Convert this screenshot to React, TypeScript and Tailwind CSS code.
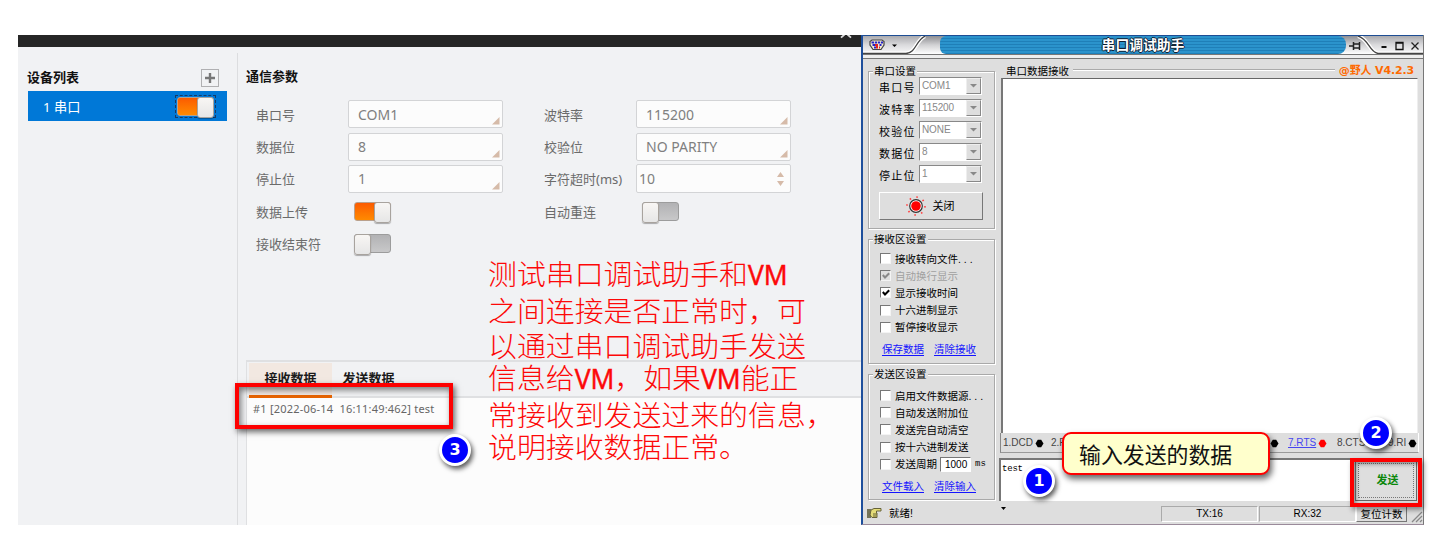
import React from 'react'

const ui = "font-['Noto_Sans','Noto_Sans_CJK_SC',sans-serif]"
const win = "font-['Liberation_Sans','Noto_Sans_CJK_SC',sans-serif]"

function Toggle({ on }: { on?: boolean }) {
  return (
    <div
      className={
        on
          ? 'flex h-[19px] w-[37px] justify-end rounded-[3px] border border-[#b9a08c] bg-linear-to-b from-[#fb5a00] to-[#ff8a00]'
          : 'flex h-[19px] w-[37px] justify-start rounded-[3px] border border-[#9c9c9c] bg-linear-to-b from-[#b2b2b4] to-[#c8c8c9]'
      }
    >
      <div className="-m-px h-[21px] w-[17px] shrink-0 rounded-[3px] border border-[#a8a39e] bg-linear-to-b from-[#f8f6f4] to-[#e6e6e6] shadow-[0_1px_1px_rgba(0,0,0,.3)]" />
    </div>
  )
}

function Field({ value }: { value: string }) {
  return (
    <div className="flex h-7 w-[155px] items-center justify-between rounded-[2px] border border-[#d3d4d6] bg-[#fcfcfc] pr-[2px] pl-[9px]">
      <span className="pt-px text-[14px] leading-[26px] text-[#808080]">{value}</span>
      <svg width="8" height="8" className="mb-[2px] self-end">
        <path d="M7.5 0V7.5H0Z" fill="#d6bba9" />
      </svg>
    </div>
  )
}

function Row({ label, children }: { label: string; children: React.ReactNode }) {
  return (
    <div className="flex h-[32.4px] items-center">
      <span className="w-[92px] whitespace-nowrap pt-px text-[13px] leading-4 text-[#6b6b6b]">{label}</span>
      {children}
    </div>
  )
}

function Badge({ n, place }: { n: string; place: string }) {
  return (
    <div
      className={`absolute flex h-[32px] w-[32px] items-center justify-center rounded-full border-[3px] border-white bg-[#0000fe] font-['DejaVu_Sans',sans-serif] text-[16px] leading-none font-bold text-white shadow-[2px_3px_5px_rgba(0,0,0,.65)] ${place}`}
    >
      {n}
    </div>
  )
}

function DevicePanel() {
  return (
    <section className={`flex h-[490px] w-[843px] flex-col overflow-hidden bg-[#f1f2f4] ${ui}`}>
      <header className="flex h-3 shrink-0 justify-end bg-[#262626] pr-[9px]">
        <svg width="12" height="4">
          <path d="M1 2.6L4.500 -.4M7.500 -.4L11 2.6" stroke="#ddd" strokeWidth="1.8" />
        </svg>
      </header>
      <div className="flex min-h-0 flex-1">
        <aside className="flex w-[219px] flex-col pt-[22px] pr-[9px] pl-[9px]">
          <div className="flex h-[18px] items-center justify-between pr-[9px]">
            <h2 className="pb-[3px] text-[13px] leading-4 font-bold text-[#111]">设备列表</h2>
            <div className="flex h-[18px] w-[18px] items-center justify-center border border-[#b0b0b2]">
              <svg width="10" height="10">
                <path d="M5 0V10M0 5H10" stroke="#777" strokeWidth="2.4" />
              </svg>
            </div>
          </div>
          <div className="mt-1 ml-px flex h-[30px] w-[199px] items-center justify-between bg-[#0078d7] pr-[11px] pl-[15px] text-white">
            <span className="pt-[2px] text-[13.2px] leading-5">1 串口</span>
            <div className="border border-dashed border-[#153a66] p-px">
              <Toggle on />
            </div>
          </div>
        </aside>
        <div className="mt-[6px] w-px bg-[#dcdddf]" />
        <main className="flex min-w-0 flex-1 flex-col pl-2">
          <h2 className="mt-[21px] text-[13px] leading-4 font-bold text-[#111]">通信参数</h2>
          <div className="mt-[14px] flex pl-[10px]">
            <div className="w-[288px]">
              <Row label="串口号"><Field value="COM1" /></Row>
              <Row label="数据位"><Field value="8" /></Row>
              <Row label="停止位"><Field value="1" /></Row>
              <Row label="数据上传"><div className="pl-[6px]"><Toggle on /></div></Row>
              <Row label="接收结束符"><div className="pl-[6px]"><Toggle /></div></Row>
            </div>
            <div>
              <Row label="波特率"><Field value="115200" /></Row>
              <Row label="校验位"><Field value="NO PARITY" /></Row>
              <Row label="字符超时(ms)">
                <div className="flex h-[29px] w-[155px] items-center justify-between rounded-[2px] border border-[#d3d4d6] bg-[#fcfcfc] pr-[6px] pl-[2px]">
                  <span className="text-[14px] text-[#808080]">10</span>
                  <svg width="7" height="14">
                    <path d="M0 5L3.5 0L7 5ZM0 9L3.5 14L7 9Z" fill="#d6bba9" />
                  </svg>
                </div>
              </Row>
              <Row label="自动重连"><div className="pl-[6px]"><Toggle /></div></Row>
            </div>
          </div>
          <div className="mt-auto flex h-[165px] shrink-0 flex-col border-t-2 border-l border-[#dfe0e2]">
            <div className="flex h-[36px] shrink-0 border-b-2 border-[#dfe0e2] pl-[2px] text-[13px] font-bold text-[#1b1b1b]">
              <div className="mt-px h-[35px] w-[83px] border-b-[3px] border-[#e66300] bg-[#f2e8e1] text-center leading-[30px]">接收数据</div>
              <div className="mt-px w-[73px] text-center leading-[30px]">发送数据</div>
            </div>
            <div className="flex-1 bg-[#fcfcfc] pt-[2px] pl-[6px]">
              <p className="text-[11px] leading-[17px] tracking-[.21px] whitespace-pre text-[#666]">#1 [2022-06-14  16:11:49:462] test</p>
            </div>
          </div>
        </main>
      </div>
    </section>
  )
}

function Group({ title, className, children }: { title: string; className: string; children: React.ReactNode }) {
  return (
    <fieldset className={`w-[127px] border border-[#a9a9a9] shadow-[1px_1px_0_#fff,inset_1px_1px_0_#fff] ${className}`}>
      <legend className="ml-[4px] h-3 bg-[#dedede] px-px text-[10.5px] leading-3">{title}</legend>
      {children}
    </fieldset>
  )
}

function Combo({ label, value }: { label: string; value: string }) {
  return (
    <div className="flex h-[22px] items-start">
      <span className="w-[40px] pt-[4px] text-[11px] leading-[14px] tracking-[1.2px] whitespace-nowrap">{label}</span>
      <div className="flex h-[18px] w-[63px] justify-between border border-t-[#888] border-r-[#fff] border-b-[#fff] border-l-[#888] bg-white">
        <span className="pl-[2px] text-[10px] leading-[15px] tracking-[-.1px] text-[#888]">{value}</span>
        <div className="flex w-[15px] items-center justify-center border border-t-[#eee] border-r-[#888] border-b-[#888] border-l-[#eee] bg-[#dedede]">
          <svg width="7" height="4">
            <path d="M0 0H7L3.5 3.5Z" fill="#888" />
          </svg>
        </div>
      </div>
    </div>
  )
}

function Check({ label, on, dim, children }: { label: string; on?: boolean; dim?: boolean; children?: React.ReactNode }) {
  return (
    <div className="flex h-[17.2px] items-center">
      <div className={`mr-[4px] flex h-[11px] w-[11px] shrink-0 items-center justify-center border border-t-[#777] border-r-[#f4f4f4] border-b-[#f4f4f4] border-l-[#777] ${dim ? 'bg-[#dedede]' : 'bg-white'}`}>
        {on && (
          <svg width="8" height="8">
            <path d="M.8 3L3 5.5L7.2 1.2" fill="none" stroke={dim ? '#888' : '#000'} strokeWidth="2" />
          </svg>
        )}
      </div>
      <span className={`text-[10.5px] leading-[14px] whitespace-nowrap ${dim ? 'text-[#a0a0a0]' : 'text-black'}`}>{label}</span>
      {children}
    </div>
  )
}

function Links({ a, b }: { a: string; b: string }) {
  return (
    <div className="flex gap-[10px] pl-[2px] text-[10.5px] leading-[14px] text-[#1414ff] underline underline-offset-2">
      <span>{a}</span>
      <span>{b}</span>
    </div>
  )
}

function Dot({ red }: { red?: boolean }) {
  return (
    <svg width="9" height="9" className="ml-[2px]">
      <path d="M2.8 .8H6.2L8.5 4.5L6.2 8.2H2.8L.5 4.5Z" fill={red ? '#f00' : '#000'} />
    </svg>
  )
}

function Signal({ name, width, red }: { name: string; width: string; red?: boolean }) {
  return (
    <div className={`flex items-center ${width}`}>
      <span className={red ? 'text-[#4646f0] underline' : 'text-[#444]'}>{name}</span>
      <Dot red={red} />
    </div>
  )
}

function TitleBar() {
  return (
    <header className="flex h-[24px] shrink-0 flex-col border-b border-[#777] bg-[#eee]">
      <div className="flex h-[20px] shrink-0 border-t border-b border-t-[#1d4d94] border-b-[#777] bg-linear-to-b from-[#8f8f93] via-[#d2d2d4] to-white">
        <svg width="77" height="18" className="shrink-0">
          <path d="M0 0H61C53 4 53 17 43 17.5H0Z" fill="#f0f0f2" fillOpacity=".3" />
          <path d="M0 17.500H43C53 17 53 4 62 .2" fill="none" stroke="#fff" strokeWidth="4" />
          <path d="M0 17.500H43C53 17 53 4 62 .2" fill="none" stroke="#444" strokeWidth="1.300" />
          <path d="M9 4H19L21 5.500V9L18 13.500H10L7 9V5.500Z" fill="#f4ecd0" stroke="#444" strokeWidth="1.200" />
          <path d="M8.500 6.500H11M11.800 6.500H14M14.800 6.500H17M17.800 6.500H20M9.500 9H12M16.500 9H18.500M11 11.500H13" stroke="#2222c8" strokeWidth="2" />
          <path d="M14 8V12.500M12 9H13M16 11.500H17" stroke="#d22" strokeWidth="2" />
          <path d="M29 8.500H34L31.500 11Z" fill="#000" />
        </svg>
        <div className="h-[18px] w-[407px] rounded-l-[6px] rounded-r-[8px] bg-[repeating-linear-gradient(180deg,#2b93cc_0_2px,#1f7fb8_2px_3px)] text-center text-[13.8px] leading-[19px] font-bold text-white [text-shadow:1px_0_#123,-1px_0_#123,0_1px_#123,0_-1px_#123]">
          串口调试助手
        </div>
        <svg width="77" height="18" className="shrink-0">
          <path d="M15 0C24 3 24 16 33 17.500H77V0Z" fill="#f0f0f2" fillOpacity=".3" />
          <path d="M12 0C23 3 23 16 32 17.500H77" fill="none" stroke="#fff" strokeWidth="4" />
          <path d="M12 0C23 3 23 16 32 17.500H77" fill="none" stroke="#444" strokeWidth="1.300" />
          <path d="M3 10H7M7.500 6V14M8 8H13M8 12H13M13.500 6V14" fill="none" stroke="#222" strokeWidth="1.500" />
          <path d="M35.500 11H40.500" stroke="#111" strokeWidth="2" />
          <path d="M50 6.500H57V13.500H50ZM50 7H57" fill="none" stroke="#111" strokeWidth="1.300" />
          <path d="M65.500 6.500L72.500 13.500M72.500 6.500L65.500 13.500" stroke="#222" strokeWidth="1.300" />
        </svg>
      </div>
    </header>
  )
}

function SerialTool() {
  return (
    <section className={`flex h-[490px] w-[563px] flex-col overflow-hidden border-r border-b border-l-2 border-r-[#777] border-b-[#9a8a9a] border-l-[#1e4f9c] bg-[#dedede] text-black ${win}`}>
      <TitleBar />
      <div className="flex h-[442px] shrink-0">
        <div className="flex w-[136px] flex-col pl-[5px]">
          <Group title="串口设置" className="mt-[6px] h-[164px]">
            <div className="pl-[10px]">
              <div>
                <Combo label="串口号" value="COM1" />
                <Combo label="波特率" value="115200" />
                <Combo label="校验位" value="NONE" />
                <Combo label="数据位" value="8" />
                <Combo label="停止位" value="1" />
              </div>
              <div className="mt-[5px] flex h-[28px] w-[104px] items-center justify-center gap-[6px] border border-t-white border-r-[#777] border-b-[#777] border-l-white bg-[#dedede] pr-[3px] text-[11px]">
                <svg width="22" height="22">
                  <circle cx="11" cy="11" r="9" fill="none" stroke="#f44" strokeWidth="1.600" strokeDasharray="1.600 5.470" />
                  <circle cx="11" cy="11" r="6.300" fill="#fff" stroke="#333" strokeWidth="1.200" />
                  <circle cx="11" cy="11" r="4.800" fill="#f00" />
                </svg>
                <span>关闭</span>
              </div>
            </div>
          </Group>
          <Group title="接收区设置" className="mt-[4px] h-[131px]">
            <div className="pt-[5px] pl-[11px]">
              <Check label="接收转向文件. . ." />
              <Check label="自动换行显示" on dim />
              <Check label="显示接收时间" on />
              <Check label="十六进制显示" />
              <Check label="暂停接收显示" />
              <div className="pt-[6px]"><Links a="保存数据" b="清除接收" /></div>
            </div>
          </Group>
          <Group title="发送区设置" className="mt-[4px] h-[132px]">
            <div className="pt-[7px] pl-[11px]">
              <Check label="启用文件数据源. . ." />
              <Check label="自动发送附加位" />
              <Check label="发送完自动清空" />
              <Check label="按十六进制发送" />
              <Check label="发送周期">
                <span className="ml-[3px] h-[15px] w-[31px] border border-t-[#777] border-r-white border-b-white border-l-[#777] bg-white pl-[4px] text-[10px] leading-[14px]">1000</span>
                <span className="ml-[4px] font-['Liberation_Mono',monospace] text-[9px] leading-3">ms</span>
              </Check>
              <div className="pt-[6px]"><Links a="文件载入" b="清除输入" /></div>
            </div>
          </Group>
        </div>
        <div className="flex w-[424px] flex-col">
          <div className="flex h-[19px] shrink-0 justify-between pt-[5px] pr-[4px] pl-[7px] text-[10.5px] leading-[14px]">
            <span>串口数据接收</span>
            <div className="mx-1 mt-[5px] h-[2px] flex-1 border-t border-b border-t-[#aaa] border-b-white" />
            <span className="pr-[5px] font-['DejaVu_Sans','Noto_Sans_CJK_SC',sans-serif] text-[11px] font-bold tracking-[-.15px] text-[#ff6a00]">@野人 V4.2.3</span>
          </div>
          <div className="ml-[2px] h-[355px] w-[417px] shrink-0 border-t border-r border-l-2 border-t-[#666] border-r-[#eee] border-l-[#777] bg-white" />
          <div className="ml-px flex h-[20px] w-[419px] shrink-0 border-r border-b border-l border-r-white border-b-[#999] border-l-[#888] pt-px pl-[2px] text-[10px] leading-4">
            <Signal name="1.DCD" width="w-[48px]" />
            <div className="flex w-[228px] shrink-0 items-center justify-between">
              <span className="text-[#444]">2.R</span>
              <Dot />
            </div>
            <Signal name="7.RTS" width="ml-[9px] w-[49px] shrink-0" red />
            <Signal name="8.CTS" width="w-[51px] shrink-0" />
            <Signal name="9.RI" width="w-[30px] shrink-0" />
          </div>
          <div className="mt-[5px] flex h-[43px] shrink-0 bg-white">
            <div className="w-[351px] border-t-2 border-l-2 border-t-[#777] border-l-[#777] bg-white pl-px font-['Liberation_Mono',monospace] text-[9px] leading-[18px] tracking-[-.2px]">test</div>
            <div className="w-[73px] bg-[#dedede] pt-[2px] pr-[6px] pl-[5px]">
              <button className="block h-[41px] w-full border border-t-[#999] border-r-[#666] border-b-[#666] border-l-[#777] bg-[#dedede] p-[2px]">
                <span className="flex h-full w-full items-center justify-center border border-dotted border-[#777] pl-[3px] text-[11px] font-bold text-[#0a870a]">发送</span>
              </button>
            </div>
          </div>
        </div>
      </div>
      <footer className="flex h-[23px] items-center pl-[4px] text-[11px]">
        <svg width="15" height="12" className="shrink-0">
          <path d="M0 2H4V11H0Z" fill="#74745a" />
          <path d="M4 3L7 1.500H14V4H9.500V6H10V10.500H5L3 8Z" fill="#e4dc78" stroke="#666238" />
          <path d="M6 7H10M6 9H9.500" stroke="#666238" />
        </svg>
        <span className="w-[115px] shrink-0 pt-[3px] pl-[7px] text-[10.5px]">就绪!</span>
        <svg width="6" height="4" className="mb-[8px] ml-[4px] shrink-0">
          <path d="M0 0H5L2.500 3Z" />
        </svg>
        <div className="mt-[2px] ml-[154px] h-[16px] w-[97px] shrink-0 border border-t-[#aaa] border-r-white border-b-white border-l-[#aaa] text-center text-[10px] leading-[14px]">TX:16</div>
        <div className="mt-[2px] ml-px h-[16px] w-[97px] shrink-0 border border-t-[#aaa] border-r-white border-b-white border-l-[#aaa] text-center text-[10px] leading-[14px]">RX:32</div>
        <div className="mt-[2px] h-[16px] w-[51px] shrink-0 border border-t-white border-r-[#777] border-b-[#777] border-l-white text-center text-[10.5px] leading-[15px]">复位计数</div>
        <svg width="12" height="12" className="mt-[8px] ml-[4px] shrink-0">
          <path d="M1 11L11 1M5 11L11 5M9 11L11 9" stroke="#888" strokeWidth="1.300" />
        </svg>
      </footer>
    </section>
  )
}

const VM = () => <span className="font-['Open_Sans',sans-serif] text-[26.5px] leading-none font-medium [-webkit-text-stroke:.5px_#fd0808]">VM</span>

export default function App() {
  return (
    <div className="relative h-[557px] w-[1439px] overflow-hidden bg-white pt-[35px] pl-[18px]">
      <div className="flex">
        <DevicePanel />
        <SerialTool />
      </div>

      <div className="absolute top-[256px] left-[488px] font-['Noto_Sans_CJK_SC',sans-serif] text-[28.9px] leading-[32px] font-light whitespace-nowrap text-[#fd0808]">
        <p className="h-[37px]">测试串口调试助手和<VM /></p>
        <p className="h-[35px]">之间连接是否正常时，可</p>
        <p className="h-[32px]">以通过串口调试助手发送</p>
        <p className="h-[37px]">信息给<VM />，如果<VM />能正</p>
        <p className="h-[32px]">常接收到发送过来的信息，</p>
        <p className="h-[32px]">说明接收数据正常。</p>
      </div>

      <div className="absolute top-[383px] left-[235px] h-[46px] w-[218px] border-4 border-[#fd0000] shadow-[2px_3px_6px_rgba(0,0,0,.6),inset_2px_3px_6px_rgba(0,0,0,.5)]" />
      <div className="absolute top-[458px] left-[1350px] h-[49px] w-[72px] border-4 border-[#fd0000] shadow-[2px_3px_5px_rgba(0,0,0,.4),inset_2px_2px_4px_rgba(0,0,0,.4)]" />
      <div className="absolute top-[432px] left-[1062px] flex h-[43px] w-[208px] items-center rounded-[9px] border-2 border-[#f00] bg-[#ffc] pl-[15px] font-['Noto_Sans_CJK_SC',serif] text-[21.900px] leading-none text-[#111] shadow-[2px_4px_6px_rgba(0,0,0,.6)]">
        输入发送的数据
      </div>
      <Badge n="1" place="left-[1023px] top-[465px]" />
      <Badge n="2" place="left-[1360px] top-[417px]" />
      <Badge n="3" place="left-[439px] top-[434px]" />
    </div>
  )
}
